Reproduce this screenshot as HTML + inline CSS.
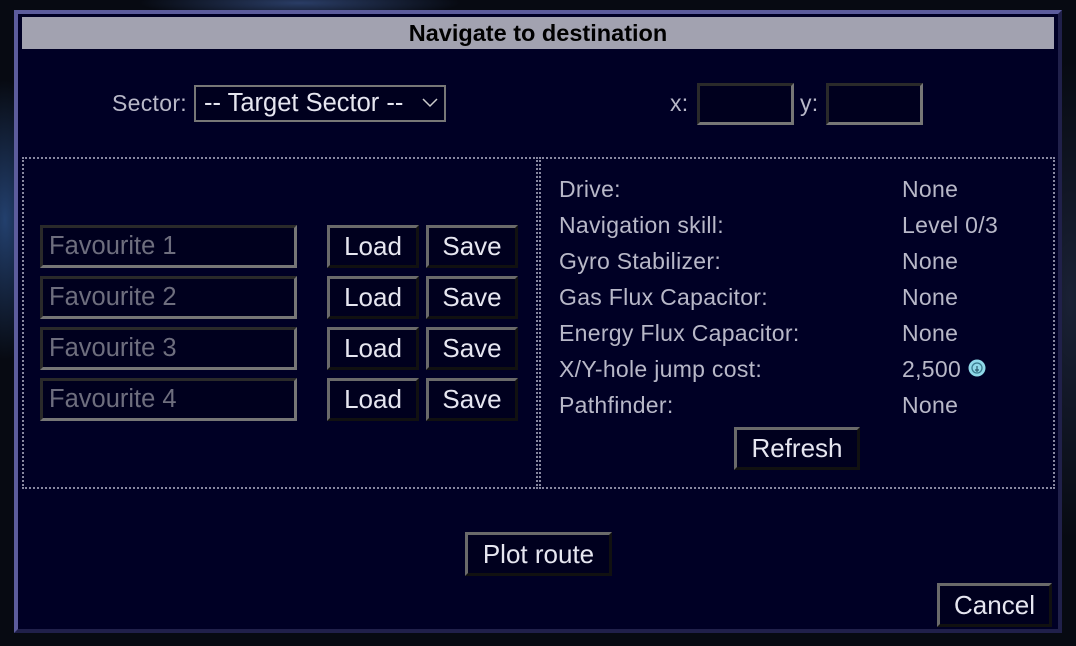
<!DOCTYPE html>
<html><head><style>
*{box-sizing:border-box;margin:0;padding:0}
body{width:1076px;height:646px;overflow:hidden;background:#05070d;font-family:"Liberation Sans",sans-serif;position:relative}
.bg{position:absolute;inset:0;background:radial-gradient(ellipse 60px 200px at 5px 220px,#23406e 0%,transparent 70%),radial-gradient(ellipse 200px 20px at 300px 3px,#2a3d66 0%,transparent 80%),radial-gradient(ellipse 80px 300px at 1070px 300px,#1a2135 0%,transparent 80%),#070a12}
.dlg{position:absolute;left:14px;top:10px;width:1048px;height:623px;background:#000025;border:4px solid #5c5c9c;border-right-color:#20204a;border-bottom-color:#20204a}
.a{position:absolute}
.title{left:22px;top:17px;width:1032px;height:32px;background:#a2a2b0;color:#000;font-weight:bold;font-size:23.5px;text-align:center;line-height:32px}
.t{color:#b8b8c8;font-size:23px;letter-spacing:0.3px;position:absolute;white-space:nowrap}
.btn{position:absolute;background:#00001e;color:#e6e6f0;font-size:26px;text-align:center;border:3px solid;border-color:#6a6a6a #111 #111 #6a6a6a}
.inp{position:absolute;background:#00001e;color:#6e6e7e;font-size:25.5px;border:3px solid;border-color:#2a2a2a #767676 #767676 #2a2a2a;padding-left:6px}
.panel{position:absolute;border:2px dotted #8888a0}
</style></head><body>
<div class="bg"></div>
<div class="dlg"></div>
<div class="a title">Navigate to destination</div>
<div class="t" style="left:112px;top:90px">Sector:</div>
<div class="a" style="left:194px;top:85px;width:252px;height:37px;border:2px solid #777;background:#00001e;color:#e6e6f0;font-size:25.5px;line-height:33px;padding-left:8px;white-space:nowrap">-- Target Sector --</div>
<svg class="a" style="left:421px;top:97px" width="18" height="12"><path d="M2 2 L9 9 L16 2" fill="none" stroke="#ccc" stroke-width="1.5"/></svg>
<div class="t" style="left:670px;top:90px">x:</div>
<div class="inp" style="left:697px;top:83px;width:97px;height:42px"></div>
<div class="t" style="left:800px;top:90px">y:</div>
<div class="inp" style="left:826px;top:83px;width:97px;height:42px"></div>
<div class="panel" style="left:22px;top:157px;width:516px;height:332px"></div>
<div class="panel" style="left:539px;top:157px;width:516px;height:332px"></div>

<div class="inp" style="left:40px;top:225px;width:257px;height:43px;line-height:37px">Favourite 1</div>
<div class="btn" style="left:327px;top:225px;width:92px;height:43px;line-height:37px">Load</div>
<div class="btn" style="left:426px;top:225px;width:92px;height:43px;line-height:37px">Save</div>
<div class="inp" style="left:40px;top:276px;width:257px;height:43px;line-height:37px">Favourite 2</div>
<div class="btn" style="left:327px;top:276px;width:92px;height:43px;line-height:37px">Load</div>
<div class="btn" style="left:426px;top:276px;width:92px;height:43px;line-height:37px">Save</div>
<div class="inp" style="left:40px;top:327px;width:257px;height:43px;line-height:37px">Favourite 3</div>
<div class="btn" style="left:327px;top:327px;width:92px;height:43px;line-height:37px">Load</div>
<div class="btn" style="left:426px;top:327px;width:92px;height:43px;line-height:37px">Save</div>
<div class="inp" style="left:40px;top:378px;width:257px;height:43px;line-height:37px">Favourite 4</div>
<div class="btn" style="left:327px;top:378px;width:92px;height:43px;line-height:37px">Load</div>
<div class="btn" style="left:426px;top:378px;width:92px;height:43px;line-height:37px">Save</div>

<div class="t" style="left:559px;top:176px">Drive:</div><div class="t" style="left:902px;top:176px">None</div>
<div class="t" style="left:559px;top:212px">Navigation skill:</div><div class="t" style="left:902px;top:212px">Level 0/3</div>
<div class="t" style="left:559px;top:248px">Gyro Stabilizer:</div><div class="t" style="left:902px;top:248px">None</div>
<div class="t" style="left:559px;top:284px">Gas Flux Capacitor:</div><div class="t" style="left:902px;top:284px">None</div>
<div class="t" style="left:559px;top:320px">Energy Flux Capacitor:</div><div class="t" style="left:902px;top:320px">None</div>
<div class="t" style="left:559px;top:356px">X/Y-hole jump cost:</div><div class="t" style="left:902px;top:356px">2,500</div>
<svg class="a" style="left:967px;top:358px" width="20" height="20"><circle cx="10" cy="10" r="8.5" fill="#8fd8e8"/><circle cx="10" cy="10" r="5" fill="none" stroke="#3a7c90" stroke-width="1.3"/><path d="M10 8v6M8 12h4" stroke="#2a5c70" stroke-width="1.2"/></svg>
<div class="t" style="left:559px;top:392px">Pathfinder:</div><div class="t" style="left:902px;top:392px">None</div>
<div class="btn" style="left:734px;top:427px;width:126px;height:43px;line-height:37px">Refresh</div>
<div class="btn" style="left:465px;top:532px;width:147px;height:44px;line-height:38px">Plot route</div>
<div class="btn" style="left:937px;top:583px;width:115px;height:44px;line-height:38px">Cancel</div>
</body></html>
